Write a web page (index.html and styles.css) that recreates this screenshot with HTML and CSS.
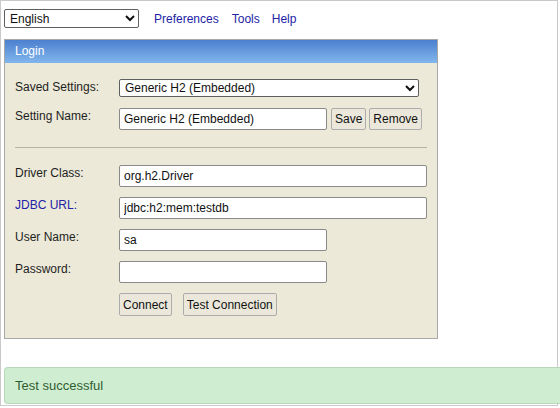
FILE: index.html
```html
<!DOCTYPE html>
<html>
<head>
<meta charset="utf-8">
<link rel="stylesheet" href="styles.css">
</head>
<body>
<div class="frame">
  <div class="topbar">
    <select class="lang"><option>English</option></select>
    <a class="nav nav-first" href="#">Preferences</a>
    <a class="nav nav-tools" href="#">Tools</a>
    <a class="nav nav-help" href="#">Help</a>
  </div>
  <div class="panel">
    <div class="panel-head">Login</div>
    <div class="panel-body">
      <div class="row row-saved">
        <span class="label">Saved Settings:</span>
        <select class="field sel-saved"><option>Generic H2 (Embedded)</option></select>
      </div>
      <div class="row row-name">
        <span class="label">Setting Name:</span>
        <input class="field short" type="text" value="Generic H2 (Embedded)">
        <button class="btn btn-save">Save</button>
        <button class="btn btn-remove">Remove</button>
      </div>
      <div class="sep"></div>
      <div class="row">
        <span class="label">Driver Class:</span>
        <input class="field long" type="text" value="org.h2.Driver">
      </div>
      <div class="row">
        <span class="label link-label">JDBC URL:</span>
        <input class="field long" type="text" value="jdbc:h2:mem:testdb">
      </div>
      <div class="row">
        <span class="label">User Name:</span>
        <input class="field short" type="text" value="sa">
      </div>
      <div class="row">
        <span class="label">Password:</span>
        <input class="field short" type="password" value="">
      </div>
      <div class="row row-actions">
        <span class="label"></span>
        <button class="btn btn-big">Connect</button>
        <button class="btn btn-big btn-test">Test Connection</button>
      </div>
    </div>
  </div>
  <div class="alert">Test successful</div>
</div>
</body>
</html>
```

FILE: styles.css
```css
* { box-sizing: border-box; }
html, body { margin: 0; padding: 0; background: #fff; }
body {
  font-family: "Liberation Sans", Arial, sans-serif;
  font-size: 12px;
  color: #1e1e1e;
  overflow: hidden;
  width: 560px;
  height: 408px;
}
.frame {
  width: 558px;
  height: 406px;
  border: 1px solid #c9c9c9;
  padding: 8px 0 0 3px;
}
.topbar {
  display: flex;
  align-items: center;
  height: 19px;
}
.lang {
  width: 135px;
  height: 19px;
  font-family: "Liberation Sans", Arial, sans-serif;
  font-size: 12px;
  color: #111;
  border: 1px solid #5f5f5f;
  border-radius: 2px;
  background: #fff;
  padding: 0 1px;
}
.nav {
  color: #2323a6;
  text-decoration: none;
  font-size: 12px;
}
.nav-first { margin-left: 15px; }
.nav-tools { margin-left: 13px; }
.nav-help { margin-left: 12px; }

.panel {
  margin-top: 11px;
  width: 434px;
  border: 1px solid #a8a8a8;
  background: #ece9d8;
}
.panel-head {
  height: 23px;
  line-height: 22px;
  padding-left: 10px;
  color: #fff;
  font-size: 12px;
  background: linear-gradient(#4b80cf, #82b6ed);
}
.panel-body {
  padding: 16px 10px 22px 10px;
}
.row {
  display: flex;
  align-items: flex-start;
  margin-bottom: 10px;
}
.row-saved { margin-bottom: 11px; }
.label {
  width: 104px;
  flex: none;
  line-height: 14px;
  padding-top: 1px;
}
.link-label { color: #2323a6; }
.field {
  height: 22px;
  border: 1px solid #8a8a8a;
  border-radius: 2px;
  background: #fff;
  font-family: "Liberation Sans", Arial, sans-serif;
  font-size: 12px;
  color: #111;
  padding: 0 4px;
  margin: 0;
}
.sel-saved {
  width: 300px;
  height: 18px;
  padding: 0 1px;
  border-color: #5f5f5f;
}
.short { width: 208px; }
.long { width: 308px; }
.btn {
  height: 22px;
  margin: 0 0 0 3px;
  padding: 0 3px;
  font-family: "Liberation Sans", Arial, sans-serif;
  font-size: 12px;
  color: #111;
  background: #ebe8db;
  border: 1px solid #acacac;
  border-radius: 2px;
}
.btn-save { margin-left: 4px; }
.btn-big {
  height: 23px;
  margin: 0;
  padding: 0 3px;
}
.btn-test { margin-left: 11px; }
.row-actions { margin-bottom: 0; margin-top: 1px; }
.sep {
  height: 1px;
  background: #b5b3a8;
  margin: 17px 0 17px 0;
}
.row-name { margin-bottom: 0; }
.alert {
  position: relative;
  z-index: 1;
  margin-top: 28px;
  width: 556px;
  height: 37px;
  line-height: 35px;
  padding-left: 10px;
  background: #cfedd0;
  border: 1px solid #b9d5ba;
  border-right: 0;
  border-radius: 4px 0 0 4px;
  color: #2f5e30;
  font-family: "Liberation Sans Narrow", "Liberation Sans", Arial, sans-serif;
  font-size: 13px;
}
```
